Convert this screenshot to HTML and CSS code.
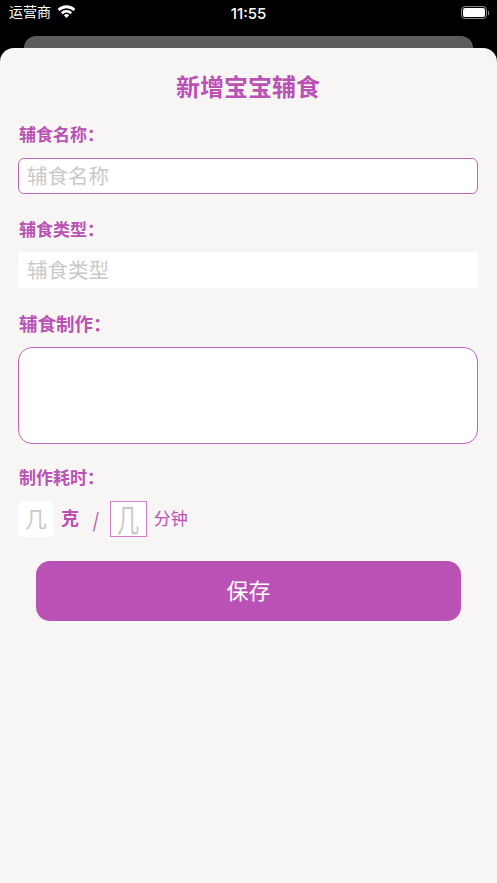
FILE: index.html
```html
<!DOCTYPE html>
<html lang="zh-CN">
<head>
    <meta charset="UTF-8">
    <title>新增宝宝辅食</title>
    <link rel="stylesheet" href="styles.css">
</head>
<body>
    <div class="status-bar">
        <div class="status-left">
            <span class="carrier">运营商</span>
            <svg class="wifi" width="19" height="15" viewBox="0 0 18 14">
                <path d="M0.6 4.6 A12 12 0 0 1 17.4 4.6 L15.6 6.5 A9.5 9.5 0 0 0 2.4 6.5 Z" fill="#fff"/>
                <path d="M3.6 7.6 A8 8 0 0 1 14.4 7.6 L12.6 9.5 A5.4 5.4 0 0 0 5.4 9.5 Z" fill="#fff"/>
                <path d="M6.5 10.5 A3.6 3.6 0 0 1 11.5 10.5 L9 13.2 Z" fill="#fff"/>
            </svg>
        </div>
        <span class="clock">11:55</span>
        <div class="battery">
            <div class="battery-body"><div class="battery-fill"></div></div>
            <div class="battery-cap"></div>
        </div>
    </div>
    <div class="back-sheet"></div>
    <div class="sheet">
        <h1 class="title">新增宝宝辅食</h1>
        <label class="field-label first">辅食名称：</label>
        <div class="input focused">辅食名称</div>
        <label class="field-label second">辅食类型：</label>
        <div class="input plain">辅食类型</div>
        <label class="field-label third">辅食制作：</label>
        <div class="textarea"></div>
        <label class="field-label fourth">制作耗时：</label>
        <div class="time-row">
            <div class="mini-input soft">几</div>
            <span class="unit-bold">克</span>
            <span class="slash">/</span>
            <div class="mini-input boxed"><span class="tall-glyph">几</span></div>
            <span class="unit">分钟</span>
        </div>
        <button class="save">保存</button>
    </div>
</body>
</html>
```
FILE: styles.css
```css
* {
    box-sizing: border-box;
}
body {
    margin: 0;
    height: 883px;
    overflow: hidden;
    background-color: #000;
    font-family: "Noto Sans CJK SC", "Liberation Sans", sans-serif;
}
.status-bar {
    height: 27px;
    padding: 0 8px 0 9px;
    display: flex;
    align-items: center;
    justify-content: space-between;
    color: #fff;
    position: relative;
}
.status-left {
    display: flex;
    align-items: center;
    gap: 6px;
}
.carrier {
    font-size: 14px;
    line-height: 21px;
    margin-top: -5px;
}
.wifi {
    margin-top: -5px;
}
.clock {
    position: absolute;
    left: 0;
    right: 0;
    text-align: center;
    font-family: "Inter", "Liberation Sans", sans-serif;
    font-size: 15px;
    font-weight: 500;
    margin-top: -1px;
}
.battery {
    display: flex;
    align-items: center;
    gap: 1px;
    margin-top: -2px;
}
.battery-body {
    width: 26px;
    height: 13px;
    border: 1px solid #8a8a8a;
    border-radius: 4px;
    padding: 1px;
}
.battery-fill {
    height: 100%;
    background-color: #fff;
    border-radius: 2px;
}
.battery-cap {
    width: 1px;
    height: 4px;
    background-color: #8a8a8a;
}
.back-sheet {
    height: 21px;
    margin: 9px 24px 0;
    background-color: #5c5c5c;
    border-radius: 12px 12px 0 0;
}
.sheet {
    height: 835px;
    margin-top: -9px;
    position: relative;
    background-color: #f7f6f5;
    border-radius: 14px 14px 0 0;
    padding: 0 19px 0 18px;
    color: #b952b4;
}
.title {
    margin: 0;
    padding-top: 22px;
    text-align: center;
    font-size: 24px;
    line-height: 32px;
    font-weight: 700;
}
.field-label {
    display: block;
    padding-left: 1px;
    font-size: 17px;
    line-height: 22px;
    font-weight: 700;
}
.first {
    margin-top: 21px;
}
.second {
    margin-top: 24px;
}
.third {
    margin-top: 24px;
    font-size: 18.5px;
}
.fourth {
    margin-top: 22px;
}
.input {
    height: 36px;
    margin-top: 13px;
    background-color: #fff;
    padding-left: 8px;
    font-size: 20.5px;
    line-height: 33px;
    color: #c9c9c9;
}
.focused {
    border: 1.5px solid #c264bd;
    border-radius: 6px;
}
.plain {
    margin-top: 12px;
    padding-left: 9px;
    line-height: 35px;
    border-radius: 2px;
}
.textarea {
    height: 97px;
    margin-top: 13px;
    background-color: #fff;
    border: 1.5px solid #c264bd;
    border-radius: 14px;
}
.time-row {
    display: flex;
    align-items: center;
    margin-top: 13px;
    height: 36px;
}
.mini-input {
    width: 36px;
    height: 36px;
    background-color: #fff;
    color: #c9c9c9;
    text-align: center;
}
.soft {
    font-size: 22px;
    line-height: 33px;
    border-radius: 4px;
}
.boxed {
    width: 37px;
    margin-left: 10px;
    font-size: 32px;
    line-height: 32px;
    border: 1.5px solid #d27fce;
}
.tall-glyph {
    display: inline-block;
    transform: scaleX(0.7);
}
.unit-bold {
    margin-left: 7px;
    margin-top: -4px;
    font-size: 18px;
    font-weight: 700;
}
.slash {
    margin-left: 13px;
    font-size: 20px;
    font-weight: 500;
    transform: scaleX(0.8);
}
.unit {
    margin-left: 7px;
    margin-top: -4px;
    font-size: 17px;
}
.save {
    display: block;
    width: 425px;
    height: 60px;
    margin: 24px 0 0 18px;
    padding-bottom: 5px;
    border: none;
    border-radius: 14px;
    background-color: #b952b4;
    color: #fff;
    font-family: inherit;
    font-size: 22px;
}
```
